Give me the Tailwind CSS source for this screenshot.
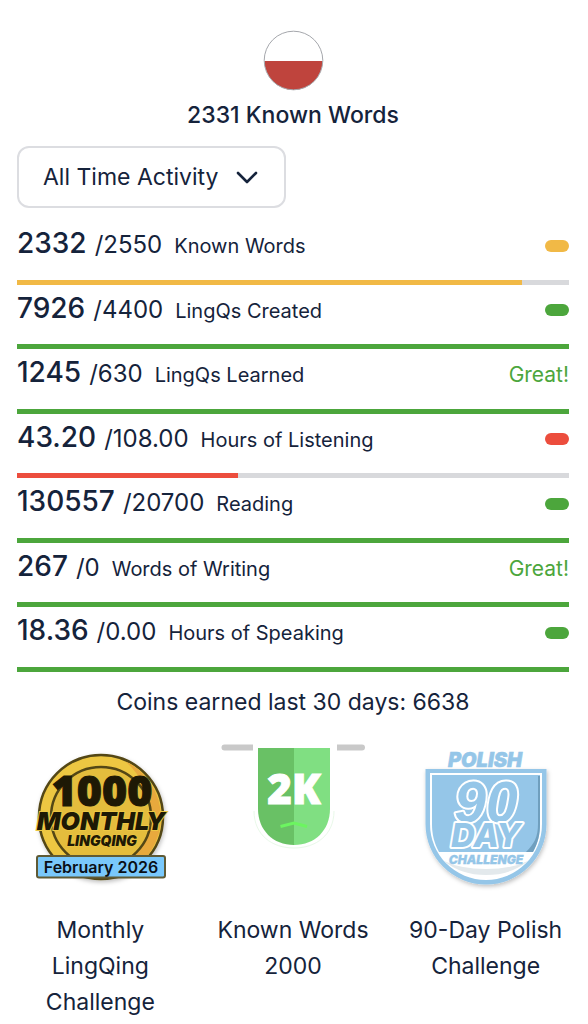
<!DOCTYPE html>
<html lang="en">
<head>
<meta charset="UTF-8">
<meta name="viewport" content="width=device-width, initial-scale=1.0">
<title>Known Words</title>
<script src="https://cdn.jsdelivr.net/npm/@tailwindcss/browser@4"></script>
</head>
<body class="bg-white font-['Inter',sans-serif] text-[#15233b]">
<main class="pr-0.5">
    <header class="flex flex-col items-center pt-[30px]">
        <svg class="size-[61px]" viewBox="0 0 61 61" role="img" aria-label="Polish">
            <circle cx="30.5" cy="30.5" r="29" fill="#fff"/>
            <path d="M1.5 31a29 29 0 0 0 58 0z" fill="#bf443d"/>
            <circle cx="30.5" cy="30.5" r="29.3" fill="none" stroke="#a5a7ac" stroke-width="1"/>
        </svg>
        <h1 class="mt-2 text-[23px] leading-8 font-medium">2331 Known Words</h1>
    </header>

    <section class="px-[17px] pt-[15px]">
        <button type="button" class="flex h-[62px] items-center gap-[18px] rounded-xl border-2 border-[#dcdde1] pr-[26px] pl-6 text-[23px]">
            All Time Activity
            <svg class="h-[13px] w-[22px]" viewBox="0 0 22 13" fill="none" stroke="#15233b" stroke-width="2.6" stroke-linecap="round" stroke-linejoin="round"><path d="m2 2 9 9 9-9"/></svg>
        </button>

        <ul class="mt-3 grid min-h-[452px] auto-rows-fr">
            <li class="flex flex-col justify-between">
                <div class="flex items-baseline leading-[47px]">
                    <span class="text-[28px] font-medium">2332</span><span class="ml-2 text-2xl">/2550</span><span class="ml-3 text-xl">Known Words</span>
                    <span class="mt-1 ml-auto h-3 w-6 self-center rounded-full bg-[#f1b946]"></span>
                </div>
                <div class="h-[5px] bg-[#d8d9dc]"><div class="h-[5px] bg-[#f1b946]" style="width: 91.4%"></div></div>
            </li>
            <li class="flex flex-col justify-between">
                <div class="flex items-baseline leading-[47px]">
                    <span class="text-[28px] font-medium">7926</span><span class="ml-2 text-2xl">/4400</span><span class="ml-3 text-xl">LingQs Created</span>
                    <span class="mt-1 ml-auto h-3 w-6 self-center rounded-full bg-[#4ca63c]"></span>
                </div>
                <div class="h-[5px] bg-[#4ca63c]"></div>
            </li>
            <li class="flex flex-col justify-between">
                <div class="flex items-baseline leading-[47px]">
                    <span class="text-[28px] font-medium">1245</span><span class="ml-2 text-2xl">/630</span><span class="ml-3 text-xl">LingQs Learned</span>
                    <span class="ml-auto text-[21px] text-[#4ca63c]">Great!</span>
                </div>
                <div class="h-[5px] bg-[#4ca63c]"></div>
            </li>
            <li class="flex flex-col justify-between">
                <div class="flex items-baseline leading-[47px]">
                    <span class="text-[28px] font-medium">43.20</span><span class="ml-2 text-2xl">/108.00</span><span class="ml-3 text-xl">Hours of Listening</span>
                    <span class="mt-1 ml-auto h-3 w-6 self-center rounded-full bg-[#ec4d3d]"></span>
                </div>
                <div class="h-[5px] bg-[#d8d9dc]"><div class="h-[5px] bg-[#ec4d3d]" style="width: 40%"></div></div>
            </li>
            <li class="flex flex-col justify-between">
                <div class="flex items-baseline leading-[47px]">
                    <span class="text-[28px] font-medium">130557</span><span class="ml-2 text-2xl">/20700</span><span class="ml-3 text-xl">Reading</span>
                    <span class="mt-1 ml-auto h-3 w-6 self-center rounded-full bg-[#4ca63c]"></span>
                </div>
                <div class="h-[5px] bg-[#4ca63c]"></div>
            </li>
            <li class="flex flex-col justify-between">
                <div class="flex items-baseline leading-[47px]">
                    <span class="text-[28px] font-medium">267</span><span class="ml-2 text-2xl">/0</span><span class="ml-3 text-xl">Words of Writing</span>
                    <span class="ml-auto text-[21px] text-[#4ca63c]">Great!</span>
                </div>
                <div class="h-[5px] bg-[#4ca63c]"></div>
            </li>
            <li class="flex flex-col justify-between">
                <div class="flex items-baseline leading-[47px]">
                    <span class="text-[28px] font-medium">18.36</span><span class="ml-2 text-2xl">/0.00</span><span class="ml-3 text-xl">Hours of Speaking</span>
                    <span class="mt-1 ml-auto h-3 w-6 self-center rounded-full bg-[#4ca63c]"></span>
                </div>
                <div class="h-[5px] bg-[#4ca63c]"></div>
            </li>
        </ul>
        <p class="mt-3 text-center text-[23px] leading-9">Coins earned last 30 days: 6638</p>
    </section>

    <section class="grid grid-cols-3 px-1 pt-[15px] text-center text-[23px] leading-9">
        <figure class="flex flex-col items-center">
            <svg class="size-[160px]" viewBox="0 0 160 160">
                <defs>
                    <clipPath id="coin"><circle cx="81" cy="82" r="61"/></clipPath>
                    <filter id="soft" x="-20%" y="-20%" width="140%" height="140%"><feDropShadow dx="1" dy="2" stdDeviation="2" flood-color="#000" flood-opacity=".25"/></filter>
                </defs>
                <g filter="url(#soft)">
                    <circle cx="81" cy="82" r="62" fill="#edc743" stroke="#534615" stroke-width="2.500"/>
                    <path d="M105 26a62 62 0 0 1 1 112l-18 6q40-24 42-62 0-34-25-56z" fill="#e8a93d" clip-path="url(#coin)"/>
                    <circle cx="81" cy="82" r="50" fill="#e4bd3e" stroke="#534615" stroke-width="2.500"/>
                </g>
                <g text-anchor="middle" fill="#1e1905" stroke="#edc743" paint-order="stroke">
                    <text x="82" y="71" font-family="Open Sans" font-size="43" font-weight="800" font-stretch="normal" stroke="#1e1905" stroke-width="1">1000</text>
                    <text x="81" y="95" font-family="Inter" font-size="25" font-weight="900" font-style="italic" stroke-width="2">MONTHLY</text>
                    <text x="82" y="111" font-family="Inter" font-size="14" font-weight="900" font-style="italic" stroke-width="1">LINGQING</text>
                </g>
                <rect x="17" y="121" width="128" height="21.500" rx="2" fill="#79c8fb" stroke="#5f5a35" stroke-width="2"/>
                <text x="81" y="138" text-anchor="middle" font-family="Inter" font-size="16" font-weight="600" fill="#0a0f16">February 2026</text>
            </svg>
            <figcaption class="mt-[17px] w-36">Monthly LingQing Challenge</figcaption>
        </figure>
        <figure class="flex flex-col items-center">
            <svg class="size-[160px]" viewBox="0 0 160 160">
                <path d="M11.500 12.500h28M124 12.500h25" stroke="#c9c9c9" stroke-width="6" stroke-linecap="round"/>
                <path d="M40 8h84v70a42 42 0 0 1-84 0z" fill="#fff"/>
                <path d="M41 76c0 24 18 37 40 37s40-13 40-37" fill="none" stroke="#e9f9e9" stroke-width="1"/>
                <path d="M45 13h36v97C60 110 45 95 45 74z" fill="#69c165"/>
                <path d="M81 13h36v61c0 21-15 36-36 36z" fill="#80df82"/>
                <text x="81" y="69" text-anchor="middle" font-family="Open Sans" font-size="42" font-weight="800" fill="#fff" stroke="#fff" stroke-width="1">2K</text>
                <path d="m67.500 91.500 13.500-3.500 13 3.500" fill="none" stroke="#6cf560" stroke-width="3"/>
            </svg>
            <figcaption class="mt-[17px] w-40">Known Words 2000</figcaption>
        </figure>
        <figure class="flex flex-col items-center">
            <svg class="size-[160px]" viewBox="0 0 160 160">
                <g filter="url(#soft)">
                    <path d="M19.500 34h121v55a60.500 60.500 0 0 1-121 0z" fill="#95c6e8"/>
                </g>
                <path d="M24 38h112v51a56 56 0 0 1-112 0z" fill="#fff"/>
                <path d="M26 40h108v49c0 10-2 19-7 28H33c-5-9-7-18-7-28z" fill="#95c6e8"/>
                <path d="M134 41v48c0 10-2 19-7 28h-7c8-8 12-15 12-28V41z" fill="#6f9fbe"/>
                <path d="M38 126q17 14 42 14t42-14q-17 8-42 8t-42-8z" fill="#e3e9ec"/>
                <text x="79" y="32" text-anchor="middle" font-family="Inter" font-size="20" font-weight="900" font-style="italic" fill="#95c6e8" stroke="#95c6e8" stroke-width=".5">POLISH</text>
                <g text-anchor="middle" font-style="italic" fill="#95c6e8" stroke="#fff" paint-order="stroke" stroke-linejoin="round">
                    <text x="80" y="87" font-family="Liberation Sans" font-size="57" font-weight="700" stroke-width="4">90</text>
                    <text x="80" y="112" font-family="Inter" font-size="33" font-weight="800" stroke-width="4">DAY</text>
                </g>
                <text x="80" y="129" text-anchor="middle" font-family="Inter" font-size="12" font-weight="900" font-style="italic" fill="#95c6e8" stroke="#95c6e8" stroke-width=".3">CHALLENGE</text>
            </svg>
            <figcaption class="mt-[17px] w-40">90-Day Polish Challenge</figcaption>
        </figure>
    </section>
</main>
</body>
</html>
